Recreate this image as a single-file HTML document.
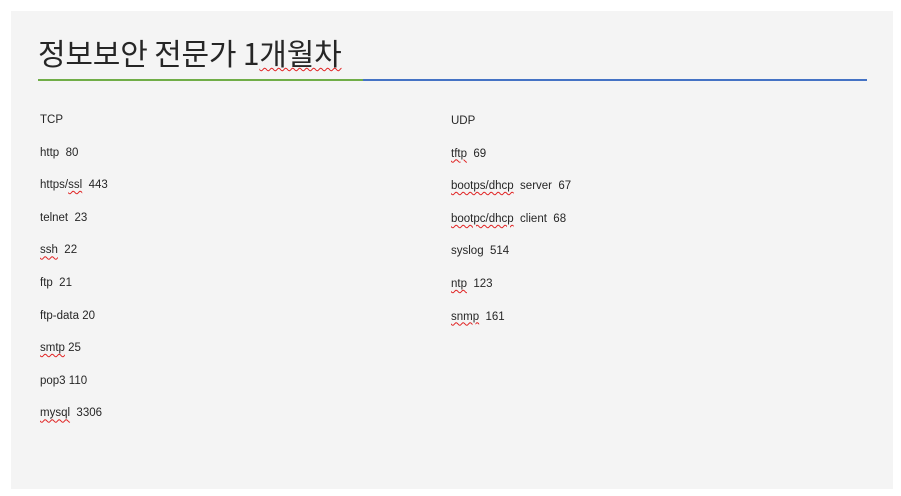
<!DOCTYPE html>
<html><head><meta charset="utf-8"><style>
body{margin:0;width:901px;height:496px;background:#fff;position:relative;overflow:hidden;font-family:"Liberation Sans","Noto Sans CJK KR",sans-serif;}
.panel{position:absolute;left:11px;top:11px;width:882px;height:478px;background:#f4f4f4;}
h1{position:absolute;left:38px;top:33px;margin:0;font-weight:normal;font-size:30px;line-height:38px;letter-spacing:-0.2px;color:#262626;font-family:"Noto Sans CJK KR","Liberation Sans",sans-serif;}
.g{position:absolute;left:38px;top:79px;width:325px;height:2px;background:#70ad47;}
.b{position:absolute;left:363px;top:79px;width:504px;height:2px;background:#4472c4;}
.col{position:absolute;top:112px;font-size:11.5px;color:#262626;}
.col div{height:32.6px;line-height:16px;white-space:pre;}
.w{text-decoration:underline wavy #e02020;text-decoration-thickness:1px;text-underline-offset:2px;}
</style></head><body>
<div class="panel"></div>
<h1>정보보안 전문가 1<span class="w">개월차</span></h1>
<div class="g"></div><div class="b"></div>
<div class="col" style="left:40px">
<div>TCP</div><div>http  80</div><div>https/<span class="w">ssl</span>  443</div><div>telnet  23</div><div><span class="w">ssh</span>  22</div><div>ftp  21</div><div>ftp-data 20</div><div><span class="w">smtp</span> 25</div><div>pop3 110</div><div><span class="w">mysql</span>  3306</div>
</div>
<div class="col" style="left:451px;top:113px">
<div>UDP</div><div><span class="w">tftp</span>  69</div><div><span class="w">bootps/dhcp</span>  server  67</div><div><span class="w">bootpc/dhcp</span>  client  68</div><div>syslog  514</div><div><span class="w">ntp</span>  123</div><div><span class="w">snmp</span>  161</div>
</div>
</body></html>
